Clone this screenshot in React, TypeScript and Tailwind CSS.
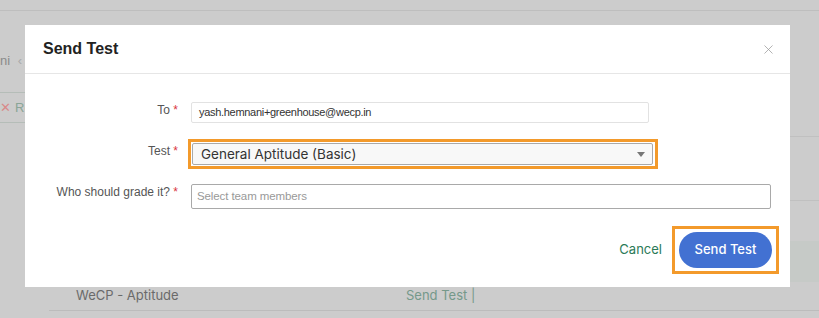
import { X } from "lucide-react";

function Label({ text }: { text: string }) {
  return (
    <div className="w-[153px] shrink-0 text-right text-[12px] leading-[14px] text-[#555]">
      {text} <span className="text-[#d9363e]">*</span>
    </div>
  );
}

function SendTestModal() {
  return (
    <div className="absolute left-[25px] top-[25px] flex h-[262px] w-[765px] flex-col bg-white">
      <div className="flex h-[49px] items-center justify-between border-b border-[#e6e6e6] pl-[18px] pr-[14px]">
        <span className="text-[16px] font-bold text-[#222]">Send Test</span>
        <X className="h-[15px] w-[15px] text-[#9a9a9a]" strokeWidth={1.2} />
      </div>

      <div className="flex flex-col pt-[28px]">
        <div className="flex items-start gap-[13px]">
          <div className="pt-[1px]">
            <Label text="To" />
          </div>
          <div className="flex h-[21px] w-[458px] items-center rounded-[2px] border border-[#e2e2e2] pl-[7px] text-[11px] tracking-[-0.3px] text-[#333]">
            yash.hemnani+greenhouse@wecp.in
          </div>
        </div>

        <div className="mt-[16px] flex items-start gap-[10px]">
          <div className="pt-[5px]">
            <Label text="Test" />
          </div>
          <div className="border-[3px] border-[#f39a2b] p-[1px] pr-[2px]">
            <div className="flex h-[22px] w-[461px] items-center justify-between rounded-[2px] border border-[#a9a9a9] bg-[#f8f8f8] pl-[8px] pr-[7px]">
              <span className="font-['Inter',sans-serif] text-[13.5px] text-[#333]">
                General Aptitude (Basic)
              </span>
              <span className="h-0 w-0 border-x-[4px] border-t-[5px] border-x-transparent border-t-[#777]" />
            </div>
          </div>
        </div>

        <div className="mt-[15px] flex items-start gap-[13px]">
          <div className="pt-[1px]">
            <Label text="Who should grade it?" />
          </div>
          <div className="flex h-[25px] w-[580px] items-center rounded-[2px] border border-[#a9a9a9] pl-[5px] text-[11.5px] tracking-[-0.1px] text-[#999]">
            Select team members
          </div>
        </div>

        <div className="mt-[17px] flex items-center justify-end gap-[10px] pr-[11px] font-['Inter',sans-serif]">
          <span className="text-[13px] text-[#2b7a57]">Cancel</span>
          <div className="border-[3px] border-[#f39a2b] px-[4px] py-[3px]">
            <button className="h-[36px] w-[93px] rounded-full bg-[#4271d2] text-[13px] font-medium text-white">
              Send Test
            </button>
          </div>
        </div>
      </div>
    </div>
  );
}

export default function App() {
  return (
    <div className="relative h-[318px] w-[819px] overflow-hidden bg-[#cccccc] font-['Liberation_Sans',Arial,sans-serif]">
      <div className="h-[11px] border-b border-[#bebebe]" />
      <div className="flex">
        <div className="flex w-[60px] flex-col text-[13px] text-[#8a8a8a]">
          <div className="h-[82px] border-b border-[#b5bdb8] pt-[42px] leading-[16px] whitespace-nowrap">
            ni <span className="ml-[4px] text-[#aaa]">‹</span>
          </div>
          <div className="flex h-[30px] items-center gap-[4px] border-b border-[#b5bdb8] whitespace-nowrap text-[#8aa597]">
            <span className="text-[#d98a8a]">✕</span> Ro
          </div>
        </div>
        <div className="ml-auto flex w-[29px] flex-col">
          <div className="h-[126px] border-b border-[#c0c0c0]" />
          <div className="h-[64px] border-b border-[#c0c0c0]" />
          <div className="h-[40px]" />
          <div className="h-[41px] bg-[#c6cac7]" />
        </div>
      </div>
      <div className="pl-[49px]">
        <div className="flex h-[29px] items-center border-b border-[#bcbcbc] font-['Inter',sans-serif] text-[13px]">
          <span className="w-[357px] pl-[27px] text-[#6a6a6a]">WeCP - Aptitude</span>
          <span className="text-[#75998a]">Send Test |</span>
        </div>
      </div>
      <SendTestModal />
    </div>
  );
}
